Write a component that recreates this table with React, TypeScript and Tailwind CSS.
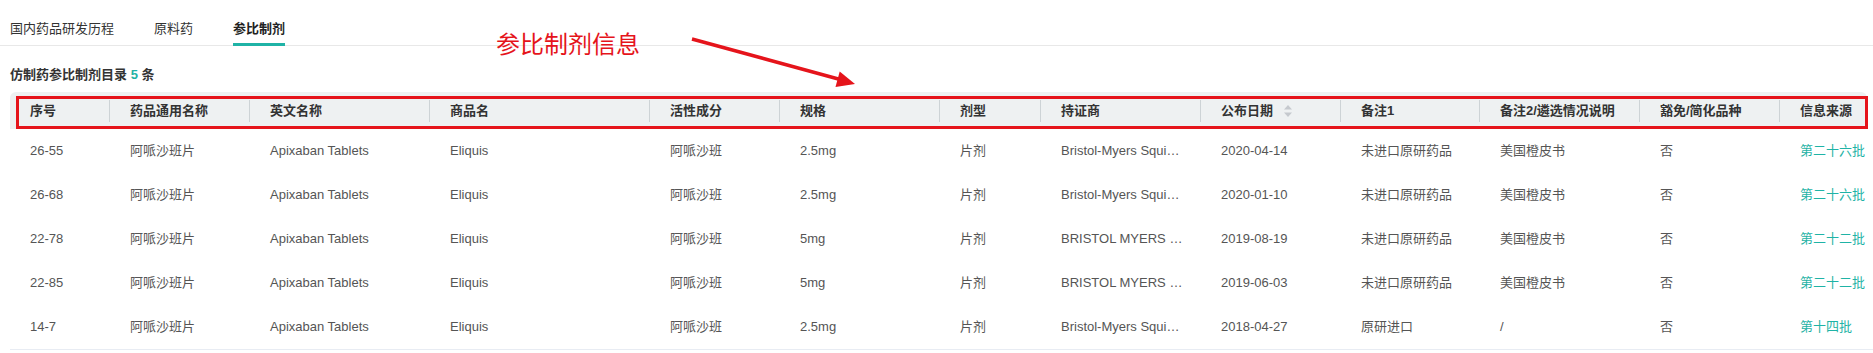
import { ReactNode } from 'react';

type Row = {
    no: string,
    name: string,
    enName: string,
    brand: string,
    ingredient: string,
    spec: string,
    form: string,
    holder: string,
    date: string,
    note1: string,
    note2: string,
    exempt: string,
    source: string
}

const rows: Row[] = [
    { no: '26-55', name: '阿哌沙班片', enName: 'Apixaban Tablets', brand: 'Eliquis', ingredient: '阿哌沙班', spec: '2.5mg', form: '片剂', holder: 'Bristol-Myers Squibb Company', date: '2020-04-14', note1: '未进口原研药品', note2: '美国橙皮书', exempt: '否', source: '第二十六批' },
    { no: '26-68', name: '阿哌沙班片', enName: 'Apixaban Tablets', brand: 'Eliquis', ingredient: '阿哌沙班', spec: '2.5mg', form: '片剂', holder: 'Bristol-Myers Squibb Company', date: '2020-01-10', note1: '未进口原研药品', note2: '美国橙皮书', exempt: '否', source: '第二十六批' },
    { no: '22-78', name: '阿哌沙班片', enName: 'Apixaban Tablets', brand: 'Eliquis', ingredient: '阿哌沙班', spec: '5mg', form: '片剂', holder: 'BRISTOL MYERS SQUIBB CO', date: '2019-08-19', note1: '未进口原研药品', note2: '美国橙皮书', exempt: '否', source: '第二十二批' },
    { no: '22-85', name: '阿哌沙班片', enName: 'Apixaban Tablets', brand: 'Eliquis', ingredient: '阿哌沙班', spec: '5mg', form: '片剂', holder: 'BRISTOL MYERS SQUIBB CO', date: '2019-06-03', note1: '未进口原研药品', note2: '美国橙皮书', exempt: '否', source: '第二十二批' },
    { no: '14-7', name: '阿哌沙班片', enName: 'Apixaban Tablets', brand: 'Eliquis', ingredient: '阿哌沙班', spec: '2.5mg', form: '片剂', holder: 'Bristol-Myers Squibb Company', date: '2018-04-27', note1: '原研进口', note2: '/', exempt: '否', source: '第十四批' },
];

const headers = ['序号', '药品通用名称', '英文名称', '商品名', '活性成分', '规格', '剂型', '持证商', '公布日期', '备注1', '备注2/遴选情况说明', '豁免/简化品种', '信息来源'];

const gridCols = 'grid grid-cols-[100px_140px_180px_220px_130px_160px_101px_160px_140px_139px_160px_140px_1fr]';

function SortIcon() {
    return (
        <svg width="10" height="14" viewBox="0 0 10 14" className="ml-[10px]">
            <path d="M5 1 L9 5.5 L1 5.5 Z" fill="#c5c9ce" />
            <path d="M5 13 L9 8.5 L1 8.5 Z" fill="#c5c9ce" />
        </svg>
    );
}

function HeadCell({ children, last }: { children: ReactNode, last?: boolean }) {
    return (
        <div
            className={
                last
                    ? 'relative flex items-center pl-5 whitespace-nowrap'
                    : "relative flex items-center pl-5 whitespace-nowrap after:absolute after:right-0 after:top-[8px] after:h-[22px] after:w-px after:bg-[#cdd3d6] after:content-['']"
            }
        >
            {children}
        </div>
    );
}

export default function App() {
    return (
        <div className="relative w-full h-[353px] bg-white font-['Liberation_Sans','Noto_Sans_CJK_SC',sans-serif] text-[13px] text-[#333]">
            {/* tabs */}
            <div className="flex gap-10 pl-[10px] border-b border-[#e8e8e8]">
                <div className="h-[46px] -mb-px pt-[20px] leading-[18px] text-[#333]">国内药品研发历程</div>
                <div className="h-[46px] -mb-px pt-[20px] leading-[18px] text-[#333]">原料药</div>
                <div className="h-[46px] -mb-px pt-[20px] leading-[18px] font-bold text-[#222] border-b-[3px] border-[#1fb3a6]">参比制剂</div>
            </div>

            <div className="mt-[20px] pl-[10px] leading-[18px] font-bold text-[#333]">
                仿制药参比制剂目录 <span className="text-[#1fb3a6]">5</span> 条
            </div>

            {/* table */}
            <div className="mt-[8px] pl-[10px]">
                <div className={`${gridCols} h-[37px] bg-[#eef1f2] rounded-t-[6px] mr-[6px] font-bold text-[#333]`}>
                    {headers.map((h, i) => (
                        <HeadCell key={h} last={i === headers.length - 1}>
                            {h}
                            {h === '公布日期' && <SortIcon />}
                        </HeadCell>
                    ))}
                </div>
                <div className="border-b border-[#e8ecf3]">
                    {rows.map((r, i) => (
                        <div key={i} className={`${gridCols} h-[44px] items-center text-[#555]`}>
                            <div className="pl-5">{r.no}</div>
                            <div className="pl-5">{r.name}</div>
                            <div className="pl-5">{r.enName}</div>
                            <div className="pl-5">{r.brand}</div>
                            <div className="pl-5">{r.ingredient}</div>
                            <div className="pl-5">{r.spec}</div>
                            <div className="pl-5">{r.form}</div>
                            <div className="pl-5 pr-4 truncate">{r.holder}</div>
                            <div className="pl-5">{r.date}</div>
                            <div className="pl-5 whitespace-nowrap">{r.note1}</div>
                            <div className="pl-5">{r.note2}</div>
                            <div className="pl-5">{r.exempt}</div>
                            <div className="pl-5 whitespace-nowrap text-[#1fb3a6]">{r.source}</div>
                        </div>
                    ))}
                </div>
            </div>

            {/* annotation */}
            <div className="absolute left-[496px] top-[30px] leading-[30px] text-[24px] text-[#e5141b]">参比制剂信息</div>
            <svg className="absolute left-[680px] top-[30px]" width="185" height="65" viewBox="0 0 185 65">
                <line x1="12" y1="9" x2="162" y2="50" stroke="#e5141b" strokeWidth="3.5" />
                <polygon points="175,54 159.7,41.5 155.5,56.9" fill="#e5141b" />
            </svg>
            <div className="absolute left-[16px] top-[96px] w-[1852px] h-[33px] border-[3px] border-[#e5141b]" />
        </div>
    );
}
